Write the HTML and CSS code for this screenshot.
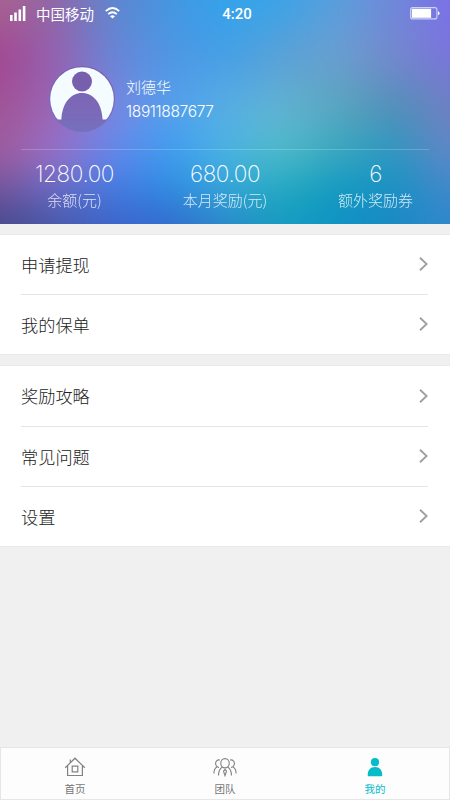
FILE: index.html
```html
<!DOCTYPE html>
<html lang="zh-CN">
<head>
<meta charset="utf-8">
<title>我的</title>
<link rel="stylesheet" href="styles.css">
</head>
<body>
<div class="app">
  <header class="hero">
    <div class="mesh"><div class="blend"><i class="m1"></i><i class="m2"></i><i class="m3"></i><i class="m4"></i><i class="m5"></i><i class="m6"></i></div></div>
    <div class="status">
      <div class="carrier">
        <svg width="16" height="15" viewBox="0 0 16 15" fill="#fff"><path d="M0 9h2.600v6H0zM4.200 6.500h2.600V15H4.200zM8.500 3.500h2.600v11.500H8.500zM12.800 0h2.600v15h-2.600z"/></svg>
        <span>中国移动</span>
        <svg class="wifi" width="15" height="12" viewBox="0 0 15 12" fill="none" stroke="#fff" stroke-width="1.8"><path d="M.8 4.2Q7.5-2.2 14.2 4.2M3.2 7.1q4.3-3.8 8.6 0"/><path d="M5 9.2q2.5-2 5 0L7.5 11.6z" fill="#fff" stroke="none"/></svg>
      </div>
      <span class="time">4:20</span>
      <svg class="battery" width="30" height="13" viewBox="0 0 30 13"><rect x=".6" y=".6" width="26.3" height="11.3" rx="2" fill="none" stroke="#fff" stroke-opacity=".65" stroke-width="1.1"/><path d="M1.8 1.8h19.3v9H1.8z" fill="#fff"/><path d="M28 4.200q1.500.4 1.500 2T28 8.300z" fill="#fff"/></svg>
    </div>
    <div class="profile">
      <svg class="avatar" width="68" height="68" viewBox="0 0 68 68">
        <defs>
          <linearGradient id="person" x1="0" y1="0" x2="0" y2="1"><stop offset="0" stop-color="#785fae"/><stop offset=".6" stop-color="#7c68b7"/><stop offset="1" stop-color="#7570bd"/></linearGradient>
          <clipPath id="disc"><circle cx="34" cy="34" r="31.8"/></clipPath>
        </defs>
        <circle cx="34" cy="34" r="33" fill="url(#person)"/>
        <g clip-path="url(#disc)"><path d="M0 0H68V54.500H54.600C54 38 45 28 34 28S14 38 13.400 54.500H0z" fill="#f4fcff"/></g>
        <circle cx="34" cy="16.500" r="10" fill="#785fae"/>
      </svg>
      <div class="who"><span class="name">刘德华</span><span class="phone">18911887677</span></div>
    </div>
    <div class="stats">
      <div class="stat"><b>1280.00</b><span>余额(元)</span></div>
      <div class="stat"><b>680.00</b><span>本月奖励(元)</span></div>
      <div class="stat"><b>6</b><span>额外奖励券</span></div>
    </div>
  </header>
  <main>
    <ul class="menu first">
      <li><span>申请提现</span><svg class="arrow" viewBox="0 0 9 14"><path d="M1 .8 7.6 7 1 13.2"/></svg></li>
      <li><span>我的保单</span><svg class="arrow" viewBox="0 0 9 14"><path d="M1 .8 7.6 7 1 13.2"/></svg></li>
    </ul>
    <ul class="menu">
      <li><span>奖励攻略</span><svg class="arrow" viewBox="0 0 9 14"><path d="M1 .8 7.6 7 1 13.2"/></svg></li>
      <li><span>常见问题</span><svg class="arrow" viewBox="0 0 9 14"><path d="M1 .8 7.6 7 1 13.2"/></svg></li>
      <li><span>设置</span><svg class="arrow" viewBox="0 0 9 14"><path d="M1 .8 7.6 7 1 13.2"/></svg></li>
    </ul>
  </main>
  <nav class="tabs">
    <a><svg width="22" height="20" viewBox="0 0 22 20" fill="none" stroke="#828282" stroke-width="1.2"><path d="M1.200 10.800 11 1.200 20.800 10.800M3.600 9v9.500h14.800V9M6.300 5.200V2.500M8.200 9.200h5.600v5.600H8.200z"/></svg><span>首页</span></a>
    <a><svg width="24" height="20" viewBox="0 0 26 20" preserveAspectRatio="none" fill="none" stroke="#828282" stroke-width="1.2"><circle cx="13" cy="6.300" r="4.600"/><path d="M10.200 10C7.400 11.600 6 14.800 6 18.500M15.800 10c2.800 1.600 4.200 4.800 4.200 8.500M11.400 14.200 13 12.500l1.600 1.700L13 18.600zM7.400 3C4.200 2.600 2.200 5 3 7.600c.3 1 .8 1.600 1.500 2.100C2.300 10.800 1 13.500 1 16.500M4.500 9.700l2 .8M18.600 3c3.200-.4 5.200 2 4.400 4.600-.3 1-.8 1.600-1.500 2.100 2.200 1.100 3.500 3.800 3.500 6.800M21.500 9.700l-2 .8"/></svg><span>团队</span></a>
    <a class="active"><svg width="16" height="20" viewBox="0 0 16 20" fill="#06bcc9"><circle cx="8" cy="5.200" r="4.100"/><path d="M.7 18.200C.7 13.500 3.300 10.100 8 10.100s7.300 3.400 7.300 8.100q0 1-1 1H1.700q-1 0-1-1z"/></svg><span>我的</span></a>
  </nav>
</div>
</body>
</html>
```
FILE: styles.css
```css
* { box-sizing: border-box; }
body { margin: 0; font-family: "Noto Sans CJK SC", sans-serif; }
.app { width: 450px; height: 800px; display: flex; flex-direction: column; background: #f0f0f0; }

.hero { position: relative; height: 224px; color: #fff; display: flex; flex-direction: column; isolation: isolate; }
.mesh { position: absolute; inset: 0; z-index: -1; overflow: hidden; }
/* the blend overshoots the hero by 40px so that its blurred edge stays hidden */
.blend { position: absolute; inset: -40px; filter: blur(16px); }
.blend i { position: absolute; inset: 0; }
/* each strip fades in over the one above it */
.m1 { background: linear-gradient(90deg, #a8648f 40px, #9068a8, #5f86cf, #4596e0, #32a4ec, #3aa4e8, #5a9fdc, #7088da, #7c70ea calc(100% - 40px)); }
.m2 { background: linear-gradient(90deg, #a34592 40px, #9461b0, #6a84d6, #4f96e3, #459fe6, #5ca0d6, #6b9fd0, #7588cc, #7a74dc calc(100% - 40px)); mask-image: linear-gradient(transparent 40px, #000 96px); }
.m3 { background: linear-gradient(90deg, #a05494 40px, #9a66b8, #7a86e2, #55a0ee, #58aee4, #62b4d2, #5aa6bd, #5090b8, #7080c0 calc(100% - 40px)); mask-image: linear-gradient(transparent 96px, #000 148px); }
.m4 { background: linear-gradient(90deg, #a05c9e 40px, #9872cc, #6488ec, #3d9cf0, #4ab4e4, #50bcc8, #38a8c0, #2c98c0, #6486c8 calc(100% - 40px)); mask-image: linear-gradient(transparent 148px, #000 192px); }
.m5 { background: linear-gradient(90deg, #70549c 40px, #646cc4, #4478e0, #2e8ae0, #34a4d8, #20a8c0, #1098c0, #1890c4, #3e88cc calc(100% - 40px)); mask-image: linear-gradient(transparent 192px, #000 232px); }
.m6 { background: linear-gradient(90deg, #44488a 40px, #4856a8, #3c64c8, #3468cc, #2a86c8, #149cc0, #1092c4, #1c88c4, #2f88cc calc(100% - 40px)); mask-image: linear-gradient(transparent 232px, #000 266px); }

.status { height: 28px; padding: 0 10px; display: grid; grid-template-columns: 1fr auto 1fr; align-items: center; }
.carrier { display: flex; align-items: center; font-size: 14.5px; line-height: 26px; }
.carrier svg:first-child { margin-bottom: 2px; }
.carrier span { margin-left: 10px; padding-bottom: 1px; }
.carrier .wifi { margin-left: 11px; margin-bottom: 2px; }
.time { font: 500 15px/28px Roboto, sans-serif; margin-left: 24px; }
.battery { justify-self: end; margin-bottom: 2px; }

.profile { height: 121px; padding: 37px 0 0 48px; display: flex; }
.who { margin-left: 10px; padding-top: 10px; display: flex; flex-direction: column; font-weight: 300; }
.name { font-size: 15px; line-height: 24px; }
.phone { font: 300 15.5px/25px Inter, sans-serif; letter-spacing: -.35px; }
.stats { margin: 0 21px; padding: 10px 0 0; border-top: 1px solid rgba(255,255,255,.2); display: flex; justify-content: space-between; }
.stat { display: flex; flex-direction: column; align-items: center; width: 107px; font-weight: 300; white-space: nowrap; }
.stat b { font: 200 22.5px/28px Inter, sans-serif; letter-spacing: -.4px; }
.stat span { font-size: 15px; line-height: 24px; opacity: .8; }

main { flex: 1; display: flow-root; }
.menu { list-style: none; margin: 12px 0 0; padding: 0 22px 0 21px; background: #fff; box-shadow: 0 0 0 1px #e9e9e9; }
.menu.first { margin-top: 11px; }
.menu li { height: 60px; display: flex; align-items: center; justify-content: space-between; font-size: 17.2px; color: #222; font-weight: 300; }
.menu.first li:first-child { height: 59px; }
.menu li span { padding-bottom: 1px; }
.menu li + li { border-top: 1px solid #e5e5e5; }
.arrow { width: 9px; height: 14px; margin-bottom: 1px; fill: none; stroke: #a0a0a0; stroke-width: 1.9; }

.tabs { height: 53px; background: #fdfdfd; box-shadow: inset 0 0 0 1px #e6e6e6; display: flex; }
.tabs a { flex: 1; display: flex; flex-direction: column; align-items: center; padding-top: 10px; color: #777; font-size: 10.5px; line-height: 16px; }
.tabs span { margin-top: 4px; }
.tabs .active { color: #06bcc9; }
```
